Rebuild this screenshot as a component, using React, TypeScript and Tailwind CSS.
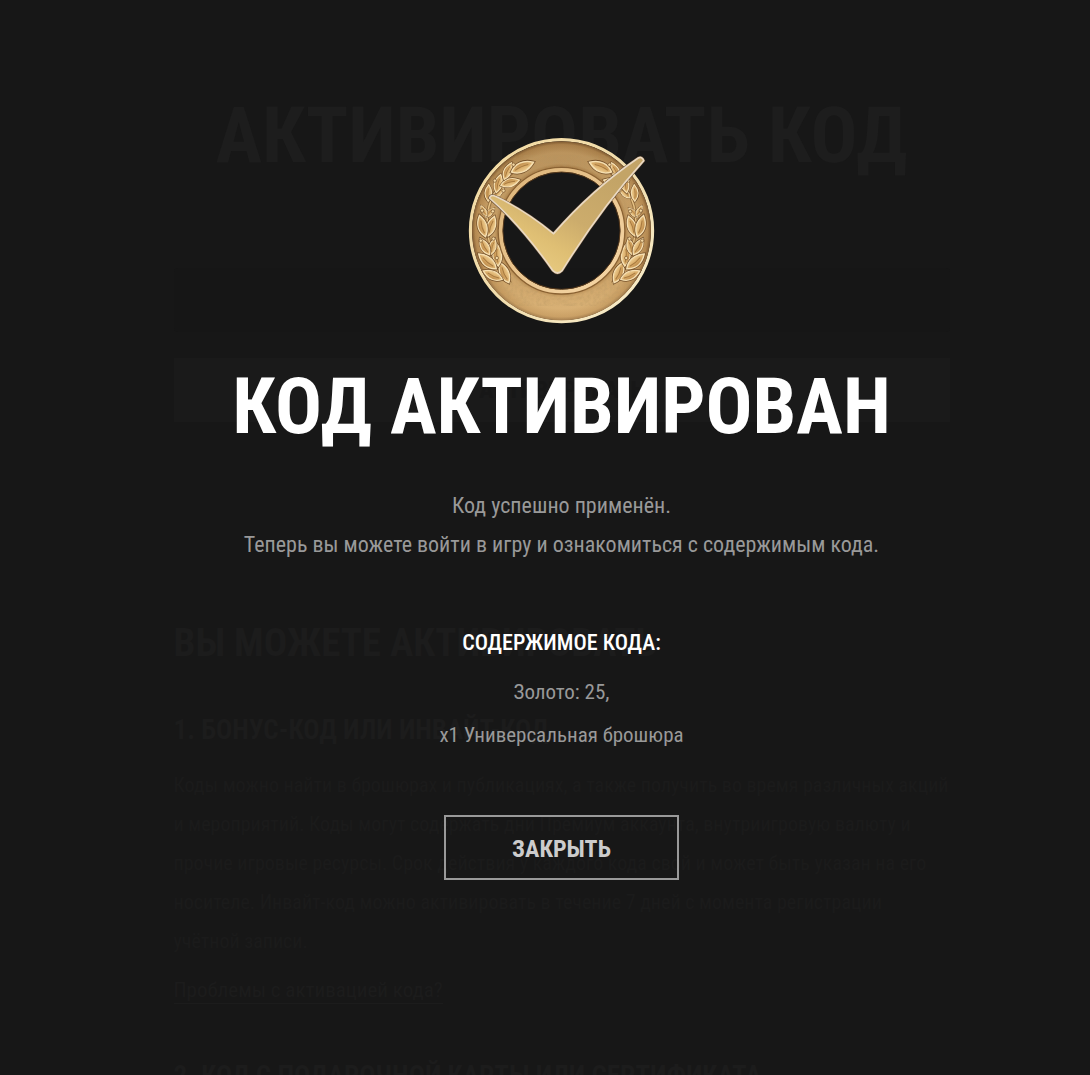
type Leaf = { x: number; y: number; angle: number; size: number };

const leaves: Leaf[] = [
  { x: 146, y: 458, angle: -24, size: 66 },
  { x: 126, y: 448, angle: -66, size: 62 },
  { x: 114, y: 408, angle: -4, size: 66 },
  { x: 108, y: 416, angle: -50, size: 68 },
  { x: 92, y: 374, angle: 14, size: 50 },
  { x: 88, y: 374, angle: -30, size: 56 },
  { x: 84, y: 318, angle: 18, size: 62 },
  { x: 76, y: 320, angle: -16, size: 66 },
  { x: 76, y: 262, angle: 44, size: 38 },
  { x: 80, y: 258, angle: -30, size: 36 },
  { x: 84, y: 214, angle: 2, size: 50 },
  { x: 98, y: 204, angle: 46, size: 46 },
  { x: 108, y: 188, angle: 14, size: 56 },
  { x: 122, y: 166, angle: 74, size: 58 },
  { x: 132, y: 148, angle: 24, size: 54 },
  { x: 154, y: 126, angle: 66, size: 72 },
];

const berries = [
  [66, 242],
  [98, 244],
  [62, 332],
  [100, 326],
  [110, 384],
  [130, 182],
  [104, 152],
  [160, 104],
];

function Sprig() {
  return (
    <g>
      <path
        d="M152 460C112 424 92 372 84 318C76 262 82 222 104 188C118 164 134 144 162 124"
        fill="none"
        stroke="#7d5629"
        strokeWidth="10"
        opacity="0.6"
      />
      <path
        d="M152 460C112 424 92 372 84 318C76 262 82 222 104 188C118 164 134 144 162 124"
        fill="none"
        stroke="#e8c486"
        strokeWidth="4"
      />
      {leaves.map((leaf) => (
        <g
          key={`${leaf.x}-${leaf.y}-${leaf.angle}`}
          transform={`translate(${leaf.x} ${leaf.y}) rotate(${leaf.angle}) scale(${leaf.size / 60})`}
        >
          <path
            d="M0 0C-15 -16 -17 -38 0 -60C16 -38 14 -16 0 0Z"
            fill="none"
            stroke="#74502a"
            strokeWidth="8"
          />
          <path
            d="M0 0C-15 -16 -17 -38 0 -60C16 -38 14 -16 0 0Z"
            fill="url(#leaf)"
            stroke="#f6dfb0"
            strokeWidth="4"
          />
          <path d="M0 -10C-3 -22 -2 -36 0 -46" fill="none" stroke="#a87a40" strokeWidth="3" />
        </g>
      ))}
      {berries.map(([x, y]) => (
        <circle key={`${x}-${y}`} cx={x} cy={y} r="5" fill="#f3d8a2" stroke="#74502a" strokeWidth="2" />
      ))}
    </g>
  );
}

function Medal() {
  return (
    <svg viewBox="24 24 560 558" className="h-[186px] w-[187px]" aria-hidden="true">
      <defs>
        <linearGradient id="rim" x1="0" y1="0" x2="1" y2="1">
          <stop offset="0" stopColor="#d9b271" />
          <stop offset="0.15" stopColor="#f3dca6" />
          <stop offset="0.5" stopColor="#f0dcac" />
          <stop offset="1" stopColor="#faf0cf" />
        </linearGradient>
        <radialGradient id="band" gradientUnits="userSpaceOnUse" cx="304" cy="302" r="272">
          <stop offset="0.69" stopColor="#a67a44" />
          <stop offset="0.74" stopColor="#c69e66" />
          <stop offset="0.86" stopColor="#c9a168" />
          <stop offset="0.95" stopColor="#b48951" />
          <stop offset="1" stopColor="#6b4825" />
        </radialGradient>
        <linearGradient id="shade" x1="0" y1="0" x2="0" y2="1">
          <stop offset="0" stopColor="#6b4a22" stopOpacity="0.15" />
          <stop offset="0.6" stopColor="#e0ad66" stopOpacity="0" />
          <stop offset="1" stopColor="#f4cc8c" stopOpacity="0.35" />
        </linearGradient>
        <linearGradient id="innerRim" x1="0" y1="0" x2="1" y2="1">
          <stop offset="0" stopColor="#dcb377" />
          <stop offset="1" stopColor="#f7d8a8" />
        </linearGradient>
        <linearGradient id="leaf" x1="0" y1="0" x2="1" y2="0">
          <stop offset="0" stopColor="#bd8a4a" />
          <stop offset="0.5" stopColor="#d9ac68" />
          <stop offset="1" stopColor="#efce92" />
        </linearGradient>
        <linearGradient id="tick" gradientUnits="userSpaceOnUse" x1="440" y1="130" x2="270" y2="420">
          <stop offset="0" stopColor="#c3a467" />
          <stop offset="0.5" stopColor="#ccac6c" />
          <stop offset="0.8" stopColor="#dfbf74" />
          <stop offset="1" stopColor="#e6c87e" />
        </linearGradient>
        <filter id="grain" x="0" y="0" width="1" height="1">
          <feTurbulence type="fractalNoise" baseFrequency="0.1" numOctaves="2" seed="4" />
          <feColorMatrix values="0 0 0 0 0.45  0 0 0 0 0.3  0 0 0 0 0.12  0.7 0 0 0 -0.25" />
          <feComposite in2="SourceGraphic" operator="in" />
        </filter>
      </defs>
      <circle cx="304" cy="302" r="273" fill="none" stroke="url(#rim)" strokeWidth="10" />
      <circle cx="304" cy="302" r="225" fill="none" stroke="url(#band)" strokeWidth="87" />
      <circle cx="304" cy="302" r="225" fill="none" stroke="url(#shade)" strokeWidth="87" />
      <circle cx="304" cy="302" r="225" fill="none" stroke="#000000" strokeWidth="80" filter="url(#grain)" />
      <Sprig />
      <g transform="translate(608 0) scale(-1 1)">
        <Sprig />
      </g>
      <circle cx="304" cy="302" r="190" fill="none" stroke="#8a6233" strokeWidth="4" />
      <circle cx="304" cy="302" r="182" fill="none" stroke="url(#innerRim)" strokeWidth="12" />
      <circle cx="304" cy="302" r="176" fill="none" stroke="#57391b" strokeWidth="3" />
      <path
        d="M88 204Q92 192 106 199C172 230 228 268 280 311C356 224 440 148 534 84Q546 78 551 92C468 184 384 296 306 422Q292 436 278 422C220 340 156 264 88 204Z"
        fill="url(#tick)"
        stroke="#5b4630"
        strokeWidth="8"
        strokeLinejoin="round"
      />
      <path
        d="M88 204Q92 192 106 199C172 230 228 268 280 311C356 224 440 148 534 84Q546 78 551 92C468 184 384 296 306 422Q292 436 278 422C220 340 156 264 88 204Z"
        fill="url(#tick)"
        stroke="#ead9c2"
        strokeWidth="5"
        strokeLinejoin="round"
      />
    </svg>
  );
}

function ActivationPage() {
  return (
    <main className="mx-auto max-w-[776px] pt-24" inert>
      <h1 className="text-center text-[78px] leading-20 font-bold whitespace-nowrap text-[#1d1d1d]">
        АКТИВИРОВАТЬ КОД
      </h1>
      <form className="mt-[92px]">
        <input
          aria-label="Код"
          className="block h-16 w-full rounded-sm bg-[#161616] text-center text-[22px] text-[#1a1a1a]"
        />
        <button
          type="button"
          className="mt-[26px] flex h-16 w-full items-center justify-center bg-[#1a1a1a] text-2xl font-bold text-[#171717]"
        >
          АКТИВИРОВАТЬ
        </button>
      </form>
      <h2 className="mt-[197px] text-[39px] leading-12 font-bold whitespace-nowrap text-[#1c1c1c]">
        ВЫ МОЖЕТЕ АКТИВИРОВАТЬ
      </h2>
      <h3 className="mt-[47px] text-[27px] leading-8 font-bold text-[#1c1c1c]">
        1. БОНУС-КОД ИЛИ ИНВАЙТ-КОД
      </h3>
      <p className="mt-5 text-[20px] leading-[39px] text-[#1b1b1b]">
        Коды можно найти в брошюрах и публикациях, а также получить во время различных акций
        <br />
        и мероприятий. Коды могут содержать дни Премиум аккаунта, внутриигровую валюту и
        <br />
        прочие игровые ресурсы. Срок действия у каждого кода свой и может быть указан на его
        <br />
        носителе. Инвайт-код можно активировать в течение 7 дней с момента регистрации
        <br />
        учётной записи.
      </p>
      <a
        href="#help"
        className="mt-4 inline-block border-b border-[#1c1c1c] text-[21px] leading-[26px] text-[#1c1c1c]"
      >
        Проблемы с активацией кода?
      </a>
      <h3 className="mt-[56px] text-[27px] leading-8 font-bold whitespace-nowrap text-[#1c1c1c]">
        2. КОД С ПОДАРОЧНОЙ КАРТЫ ИЛИ СЕРТИФИКАТА
      </h3>
    </main>
  );
}

function SuccessDialog() {
  return (
    <div
      role="dialog"
      aria-modal="true"
      aria-labelledby="dialog-title"
      className="absolute inset-0 flex flex-col items-center pt-[138px] pl-[33px] text-center text-[22px] text-[#999999]"
    >
      <Medal />
      <h1 id="dialog-title" className="mt-[43px] text-[78px] leading-20 font-bold whitespace-nowrap text-white">
        КОД АКТИВИРОВАН
      </h1>
      <p className="mt-[39px] leading-[39px]">
        Код успешно применён.
        <br />
        Теперь вы можете войти в игру и ознакомиться с содержимым кода.
      </p>
      <h2 className="mt-[63px] leading-8 font-medium text-white">СОДЕРЖИМОЕ КОДА:</h2>
      <ul className="mt-3 text-[21px] leading-[43px]">
        <li>Золото: 25,</li>
        <li>x1 Универсальная брошюра</li>
      </ul>
      <button
        type="button"
        className="mt-[58px] h-[65px] w-[235px] border-2 border-[#999999] pt-0.5 text-2xl font-bold text-[#cccccc]"
      >
        ЗАКРЫТЬ
      </button>
    </div>
  );
}

export default function App() {
  return (
    <div className="relative h-screen overflow-hidden bg-[#171717] pl-[33px] font-['Roboto_Condensed',Roboto,sans-serif]">
      <ActivationPage />
      <SuccessDialog />
    </div>
  );
}
